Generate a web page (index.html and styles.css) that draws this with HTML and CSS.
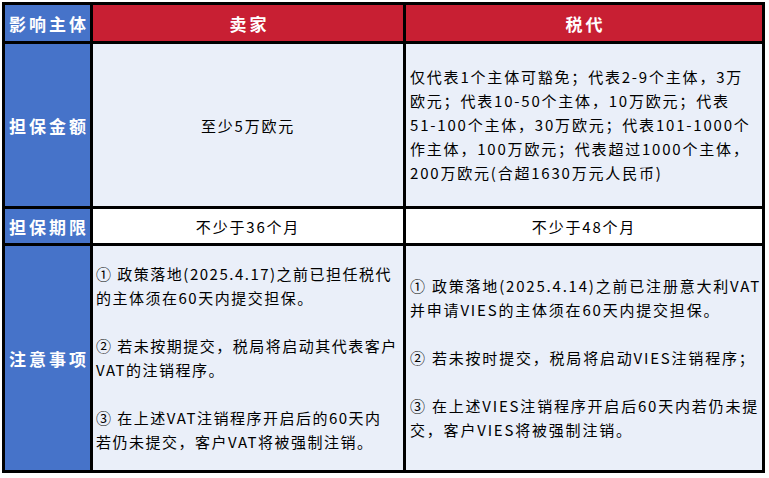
FILE: index.html
```html
<!DOCTYPE html>
<html lang="zh-CN">
<head>
<meta charset="utf-8">
<title>担保要求对比</title>
<link rel="stylesheet" href="styles.css">
</head>
<body>
<div class="sheet">
  <div class="cell label">影响主体</div>
  <div class="cell head">卖家</div>
  <div class="cell head">税代</div>

  <div class="cell label">担保金额</div>
  <div class="cell tint center">至少5万欧元</div>
  <div class="cell tint left">
    <p>仅代表1个主体可豁免；代表2-9个主体，3万<br>欧元；代表10-50个主体，10万欧元；代表<br>51-100个主体，30万欧元；代表101-1000个<br>作主体，100万欧元；代表超过1000个主体，<br>200万欧元(合超1630万元人民币)</p>
  </div>

  <div class="cell label">担保期限</div>
  <div class="cell plain center">不少于36个月</div>
  <div class="cell plain center">不少于48个月</div>

  <div class="cell label">注意事项</div>
  <div class="cell tint left narrow">
    <p>① 政策落地(2025.4.17)之前已担任税代<br>的主体须在60天内提交担保。</p>
    <p>② 若未按期提交，税局将启动其代表客户<br>VAT的注销程序。</p>
    <p>③ 在上述VAT注销程序开启后的60天内<br>若仍未提交，客户VAT将被强制注销。</p>
  </div>
  <div class="cell tint left">
    <p>① 政策落地(2025.4.14)之前已注册意大利VAT<br>并申请VIES的主体须在60天内提交担保。</p>
    <p>② 若未按时提交，税局将启动VIES注销程序；</p>
    <p>③ 在上述VIES注销程序开启后60天内若仍未提<br>交，客户VIES将被强制注销。</p>
  </div>
</div>
</body>
</html>
```

FILE: styles.css
```css
html, body {
  margin: 0;
  padding: 0;
  background: #ffffff;
}

body {
  padding: 2px;
  font-family: "Noto Sans CJK SC", "Noto Sans", sans-serif;
  color: #000000;
}

.sheet {
  display: grid;
  grid-template-columns: 85px 310px 356px;
  grid-template-rows: 36px 162px 34px 224px;
  gap: 3px;
  padding: 3px;
  background: #000000;
  width: max-content;
}

.cell {
  display: flex;
  align-items: center;
  overflow: hidden;
}

.label {
  background: #4673c9;
  color: #ffffff;
  font-weight: 700;
  font-size: 17px;
  letter-spacing: 3px;
  justify-content: center;
  padding-left: 3px;
}

.head {
  background: #c81f33;
  color: #ffffff;
  font-weight: 700;
  font-size: 17px;
  letter-spacing: 3px;
  justify-content: center;
  padding-left: 3px;
}

.tint {
  background: #eaeff9;
}

.plain {
  background: #ffffff;
}

.center {
  justify-content: center;
  font-size: 15px;
  letter-spacing: 1.8px;
}

.left {
  flex-direction: column;
  justify-content: center;
  align-items: flex-start;
  padding-left: 4px;
  font-size: 15px;
  letter-spacing: 1.8px;
  line-height: 24px;
  white-space: nowrap;
}

.left.narrow {
  padding-left: 3px;
  letter-spacing: 1.5px;
}

.left p {
  margin: 0;
}

.left p + p {
  margin-top: 24px;
}
```
